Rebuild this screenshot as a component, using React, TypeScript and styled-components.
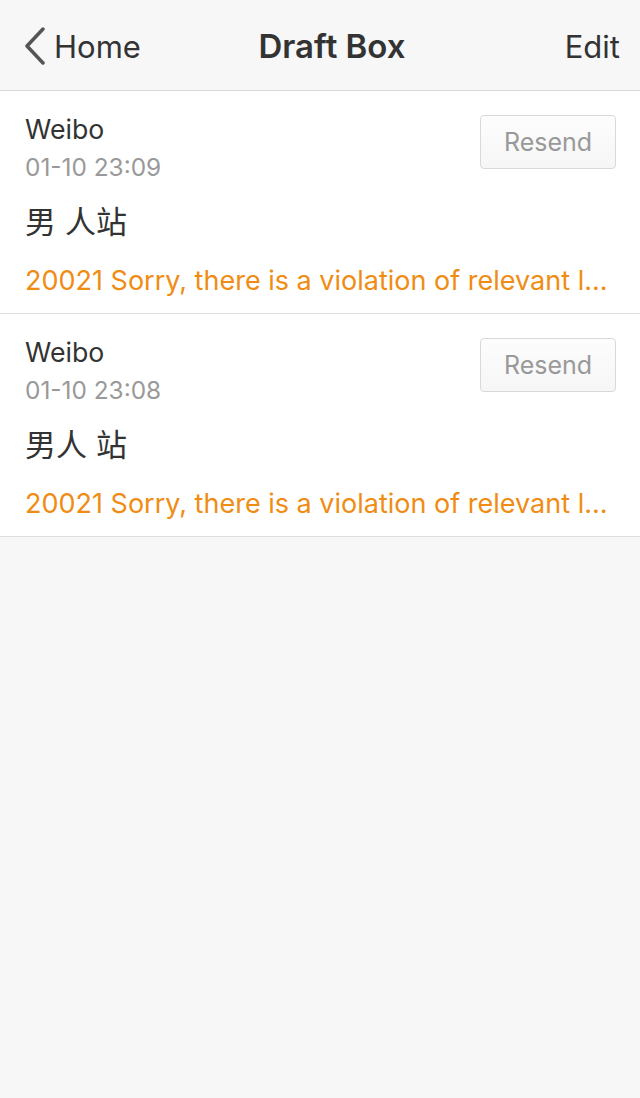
import React from "react";
import styled, { createGlobalStyle } from "styled-components";

const Global = createGlobalStyle`
  html, body { margin: 0; padding: 0; background: #f7f7f8; }
  body { font-family: Inter, "Liberation Sans", "Noto Sans CJK SC", sans-serif; -webkit-font-smoothing: antialiased; }
`;

const Page = styled.div`
  width: 640px;
  min-height: 1098px;
  background: #f7f7f8;
`;

const NavBar = styled.header`
  height: 91px;
  box-sizing: border-box;
  display: grid;
  grid-template-columns: 1fr auto 1fr;
  align-items: center;
  padding: 2px 20px 0 24px;
  border-bottom: 1px solid #d9d9d9;
  background: #f7f7f8;
  color: #333;
`;

const BackButton = styled.div`
  display: flex;
  align-items: center;
  gap: 8px;
  font-size: 31px;
  color: #333;
`;

const Title = styled.h1`
  margin: 0 0 0 20px;
  font-size: 33px;
  font-weight: 600;
  color: #333;
`;

const EditButton = styled.div`
  justify-self: end;
  font-size: 31px;
  color: #333;
`;

const Card = styled.section`
  background: #fff;
  border-bottom: 1px solid #dedede;
  padding: 20px 24px 0 25px;
  height: 223px;
  box-sizing: border-box;
`;

const TopRow = styled.div`
  display: flex;
  justify-content: space-between;
  align-items: flex-start;
`;

const Meta = styled.div`
  display: flex;
  flex-direction: column;
`;

const Source = styled.div`
  font-size: 26.7px;
  line-height: 34px;
  color: #333;
  margin-top: 1px;
`;

const Time = styled.div`
  font-size: 24.4px;
  line-height: 34px;
  color: #999;
  margin-top: 4px;
`;

const ResendButton = styled.button`
  margin-top: 4px;
  width: 136px;
  height: 54px;
  border: 1px solid #d9d9d9;
  border-radius: 4px;
  background: linear-gradient(#fdfdfd, #f6f6f6);
  color: #999;
  font-family: inherit;
  font-size: 25px;
  padding: 0;
`;

const Content = styled.div`
  margin-top: 16px;
  font-family: "Noto Sans CJK SC", sans-serif;
  font-size: 31px;
  line-height: 40px;
  color: #333;
  white-space: pre;
  word-spacing: 2px;
`;

const ErrorText = styled.div`
  margin-top: 24px;
  font-size: 27px;
  line-height: 34px;
  color: #f08c13;
  white-space: nowrap;
  overflow: hidden;
`;

const drafts = [
  { time: "01-10 23:09", content: "男 人站" },
  { time: "01-10 23:08", content: "男人 站" },
];

export default function App() {
  return (
    <Page>
      <Global />
      <NavBar>
        <BackButton>
          <svg width="22" height="38" viewBox="0 0 22 38">
            <path d="M19 2 L3 19 L19 36" fill="none" stroke="#555" strokeWidth="3.5" strokeLinecap="round" strokeLinejoin="round" />
          </svg>
          Home
        </BackButton>
        <Title>Draft Box</Title>
        <EditButton>Edit</EditButton>
      </NavBar>
      {drafts.map((d) => (
        <Card key={d.time}>
          <TopRow>
            <Meta>
              <Source>Weibo</Source>
              <Time>{d.time}</Time>
            </Meta>
            <ResendButton>Resend</ResendButton>
          </TopRow>
          <Content>{d.content}</Content>
          <ErrorText>20021 Sorry, there is a violation of relevant l...</ErrorText>
        </Card>
      ))}
    </Page>
  );
}
